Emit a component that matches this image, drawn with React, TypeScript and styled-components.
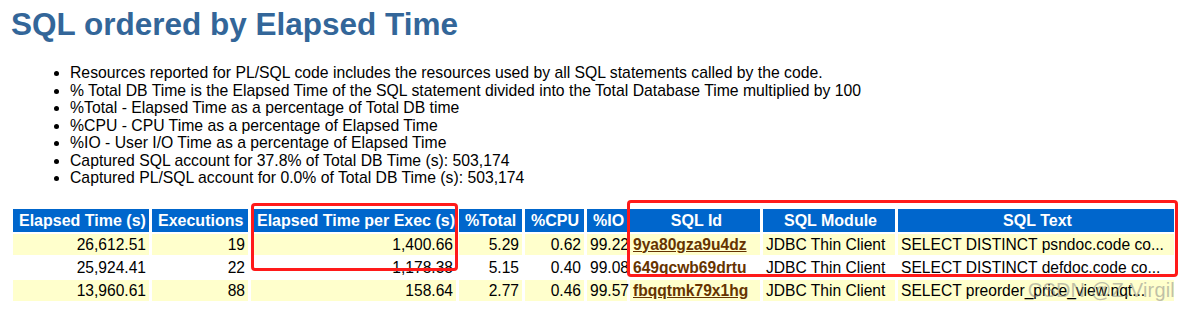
import styled, { createGlobalStyle } from "styled-components";

const GlobalStyle = createGlobalStyle`
  html, body {
    margin: 0;
    padding: 0;
    background: #fff;
  }
  body {
    font-family: "Liberation Sans", Arial, sans-serif;
  }
`;

const Page = styled.div`
  position: relative;
  width: 1181px;
  height: 310px;
  overflow: hidden;
  padding: 0 0 0 13px;
  box-sizing: border-box;
`;

const Title = styled.h2`
  margin: 0 0 0 -2px;
  padding-top: 5px;
  font-size: 31.5px;
  font-weight: bold;
  color: #336699;
  line-height: 38px;
`;

const Notes = styled.ul`
  margin: 21px 0 0 0;
  padding-left: 57px;
  font-size: 15.75px;
  line-height: 17.5px;
  color: #000;
  li {
    margin: 0;
  }
`;

const TableWrap = styled.div`
  position: relative;
  margin-top: 22px;
  width: 1161px;
`;

const Grid = styled.div`
  display: grid;
  grid-template-columns: 136px 96px 205px 63px 59px 40px 130px 132px 276px;
  column-gap: 3px;
  row-gap: 2px;
  font-size: 15.6px;
`;

const Head = styled.div<{ $center?: boolean }>`
  background: #0066cc;
  color: #fff;
  font-weight: bold;
  font-size: 16px;
  height: 23px;
  line-height: 23px;
  padding: 0 3px 0 6px;
  white-space: nowrap;
  overflow: hidden;
  text-align: ${(p) => (p.$center ? "center" : "left")};
`;

const Cell = styled.div<{ $odd: boolean; $right?: boolean }>`
  background: ${(p) => (p.$odd ? "#ffffcc" : "#ffffff")};
  color: #000;
  height: 21px;
  line-height: 21px;
  padding: 0 3px;
  white-space: nowrap;
  text-align: ${(p) => (p.$right ? "right" : "left")};
`;

const SqlLink = styled.a`
  color: #663300;
  font-weight: bold;
  text-decoration: underline;
`;

const Mark = styled.div<{ $left: number; $top: number; $w: number; $h: number }>`
  position: absolute;
  left: ${(p) => p.$left}px;
  top: ${(p) => p.$top}px;
  width: ${(p) => p.$w}px;
  height: ${(p) => p.$h}px;
  border: 3px solid #ff1a1a;
  border-radius: 4px;
  box-sizing: border-box;
  pointer-events: none;
`;

const Watermark = styled.div`
  position: absolute;
  right: 6px;
  bottom: 8px;
  font-size: 20px;
  color: rgba(130, 130, 130, 0.5);
  letter-spacing: 0.2px;
`;

type Row = {
  elapsed: string;
  execs: string;
  perExec: string;
  total: string;
  cpu: string;
  io: string;
  id: string;
  module: string;
  text: string;
};

const rows: Row[] = [
  {
    elapsed: "26,612.51",
    execs: "19",
    perExec: "1,400.66",
    total: "5.29",
    cpu: "0.62",
    io: "99.22",
    id: "9ya80gza9u4dz",
    module: "JDBC Thin Client",
    text: "SELECT DISTINCT psndoc.code co...",
  },
  {
    elapsed: "25,924.41",
    execs: "22",
    perExec: "1,178.38",
    total: "5.15",
    cpu: "0.40",
    io: "99.08",
    id: "649qcwb69drtu",
    module: "JDBC Thin Client",
    text: "SELECT DISTINCT defdoc.code co...",
  },
  {
    elapsed: "13,960.61",
    execs: "88",
    perExec: "158.64",
    total: "2.77",
    cpu: "0.46",
    io: "99.57",
    id: "fbqqtmk79x1hg",
    module: "JDBC Thin Client",
    text: "SELECT preorder_price_view.nqt...",
  },
];

const notes = [
  "Resources reported for PL/SQL code includes the resources used by all SQL statements called by the code.",
  "% Total DB Time is the Elapsed Time of the SQL statement divided into the Total Database Time multiplied by 100",
  "%Total - Elapsed Time as a percentage of Total DB time",
  "%CPU - CPU Time as a percentage of Elapsed Time",
  "%IO - User I/O Time as a percentage of Elapsed Time",
  "Captured SQL account for 37.8% of Total DB Time (s): 503,174",
  "Captured PL/SQL account for 0.0% of Total DB Time (s): 503,174",
];

export default function App() {
  return (
    <>
      <GlobalStyle />
      <Page>
        <Title>SQL ordered by Elapsed Time</Title>
        <Notes>
          {notes.map((n) => (
            <li key={n}>{n}</li>
          ))}
        </Notes>
        <TableWrap>
          <Grid>
            <Head>Elapsed Time (s)</Head>
            <Head>Executions</Head>
            <Head>Elapsed Time per Exec (s)</Head>
            <Head>%Total</Head>
            <Head>%CPU</Head>
            <Head>%IO</Head>
            <Head $center>SQL Id</Head>
            <Head $center>SQL Module</Head>
            <Head $center>SQL Text</Head>
            {rows.map((r, i) => {
              const odd = i % 2 === 0;
              return [
                <Cell key={`a${i}`} $odd={odd} $right>{r.elapsed}</Cell>,
                <Cell key={`b${i}`} $odd={odd} $right>{r.execs}</Cell>,
                <Cell key={`c${i}`} $odd={odd} $right>{r.perExec}</Cell>,
                <Cell key={`d${i}`} $odd={odd} $right>{r.total}</Cell>,
                <Cell key={`e${i}`} $odd={odd} $right>{r.cpu}</Cell>,
                <Cell key={`f${i}`} $odd={odd} $right>{r.io}</Cell>,
                <Cell key={`g${i}`} $odd={odd}>
                  <SqlLink href="#">{r.id}</SqlLink>
                </Cell>,
                <Cell key={`h${i}`} $odd={odd}>{r.module}</Cell>,
                <Cell key={`k${i}`} $odd={odd}>{r.text}</Cell>,
              ];
            })}
          </Grid>
          <Mark $left={238} $top={-6} $w={207} $h={68} />
          <Mark $left={614} $top={-9} $w={551} $h={77} />
        </TableWrap>
        <Watermark>CSDN @Z.Virgil</Watermark>
      </Page>
    </>
  );
}
